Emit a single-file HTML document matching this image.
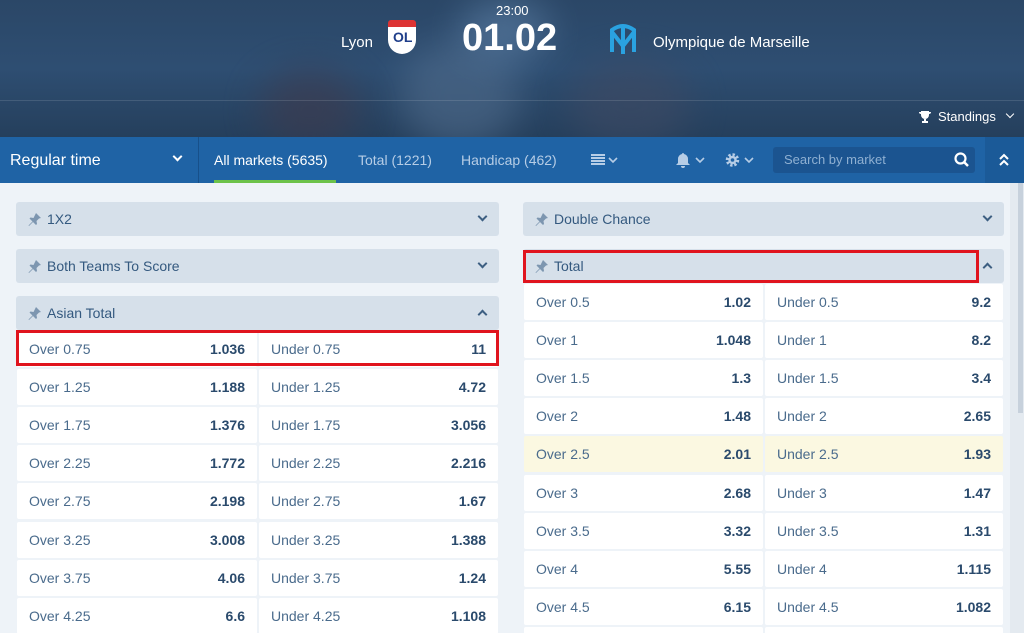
<!DOCTYPE html>
<html><head><meta charset="utf-8">
<style>
*{box-sizing:border-box;margin:0;padding:0}
html,body{width:1024px;height:633px;overflow:hidden}
body{background:#eef3f8;font-family:"Liberation Sans",sans-serif;position:relative}
.hdr{position:absolute;left:0;top:0;width:1024px;height:137px;background:linear-gradient(180deg,#2b4767 0%,#2e4e72 50%,#253f5c 100%);overflow:hidden}
.blob{position:absolute;border-radius:50%;filter:blur(18px);opacity:.6}
.t{position:absolute;color:#fff;white-space:nowrap}
.nav{position:absolute;left:0;top:137px;width:1024px;height:46px;background:#1f63a5}
.box{position:absolute;background:#d6e0ea;border-radius:3px;height:34px}
.box svg.pin{position:absolute;left:12px;top:10px}
.box .lbl{position:absolute;left:31px;top:9px;font-size:14px;color:#34597f}
.box .chev{position:absolute;right:13px;top:11px;width:7px;height:7px;border-right:2px solid #3d5f82;border-bottom:2px solid #3d5f82;transform:rotate(45deg)}
.box .up{position:absolute;right:13px;top:15px;width:7px;height:7px;border-left:2px solid #3d5f82;border-top:2px solid #3d5f82;transform:rotate(45deg)}
.cell{position:absolute;background:#fff;height:36px;border-radius:2px}
.cell .a{position:absolute;left:12px;top:10px;font-size:14px;color:#4a6b8c}
.cell .b{position:absolute;right:12px;top:10px;font-size:14px;color:#2a4a6c;font-weight:bold}
.y{background:#fbf8e1}
.red{position:absolute;border:3px solid #e0141e}
</style></head><body>
<div class="hdr">
 <div class="blob" style="left:400px;top:40px;width:120px;height:110px;background:#506c8c"></div>
 <div class="blob" style="left:260px;top:70px;width:100px;height:80px;background:#3f3a4c"></div>
 <div class="blob" style="left:570px;top:60px;width:120px;height:90px;background:#3f4a63"></div>
 <div class="blob" style="left:460px;top:0;width:90px;height:60px;background:#5f82a8"></div>
 <div style="position:absolute;left:0;top:100px;width:1024px;height:1px;background:rgba(255,255,255,.12)"></div>
 <div class="t" style="left:496px;top:3px;font-size:13px">23:00</div>
 <div class="t" style="left:462px;top:17px;font-size:38px;font-weight:bold">01.02</div>
 <div class="t" style="left:341px;top:34px;font-size:15px">Lyon</div>
 <div style="position:absolute;left:388px;top:20px;width:28px;height:34px;background:#fff;border-radius:3px 3px 14px 14px;border-top:7px solid #d33"></div>
 <div class="t" style="left:393px;top:29px;font-size:14px;font-weight:bold;color:#1f3e8a">OL</div>
 <svg style="position:absolute;left:609px;top:22px" width="28" height="34" viewBox="0 0 28 34"><path d="M3 30 L3 8 Q14 0 25 8 L25 30 M3 10 L14 24 L25 10 M14 4 L14 32" stroke="#2aa2e0" stroke-width="4" fill="none"/></svg>
 <div class="t" style="left:653px;top:34px;font-size:15px">Olympique de Marseille</div>
 <svg style="position:absolute;left:918px;top:110px" width="14" height="14" viewBox="0 0 14 14"><path d="M3 1h8v4a4 4 0 0 1-8 0z M1 2h2v2a2 2 0 0 1-2-2z M11 2h2a2 2 0 0 1-2 2z M6 9h2v2h2v2H4v-2h2z" fill="#fff"/></svg>
 <div class="t" style="left:938px;top:109px;font-size:13px">Standings</div>
 <div style="position:absolute;left:1007px;top:111px;width:6px;height:6px;border-right:1.5px solid #fff;border-bottom:1.5px solid #fff;transform:rotate(45deg)"></div>
</div>
<div class="nav">
 <div class="t" style="left:10px;top:15px;font-size:16px">Regular time</div>
 <div style="position:absolute;left:174px;top:16px;width:7px;height:7px;border-right:2px solid #fff;border-bottom:2px solid #fff;transform:rotate(45deg)"></div>
 <div style="position:absolute;left:198px;top:0;width:1px;height:46px;background:#17508a"></div>
 <div class="t" style="left:214px;top:15px;font-size:14px">All markets (5635)</div>
 <div style="position:absolute;left:214px;top:43px;width:122px;height:3px;background:#6cc24a"></div>
 <div class="t" style="left:358px;top:15px;font-size:14px;color:#b6cde6">Total (1221)</div>
 <div class="t" style="left:461px;top:15px;font-size:14px;color:#b6cde6">Handicap (462)</div>
 <svg style="position:absolute;left:590px;top:16px" width="32" height="14"><path d="M1 2h14M1 5h14M1 8h14M1 11h14" stroke="#b6cde6" stroke-width="2"/><path d="M19 5l4 4 4-4" stroke="#b6cde6" stroke-width="1.6" fill="none"/></svg>
 <svg style="position:absolute;left:676px;top:15px" width="34" height="16"><path d="M7 1a1 1 0 0 1 1 1 5 5 0 0 1 4 5v4l2 2H0l2-2V7a5 5 0 0 1 4-5 1 1 0 0 1 1-1z M5 14h4a2 2 0 0 1-4 0z" fill="#b6cde6"/><path d="M20 6l4 4 4-4" stroke="#b6cde6" stroke-width="1.6" fill="none"/></svg>
 <svg style="position:absolute;left:725px;top:15px" width="34" height="16"><circle cx="7.5" cy="8" r="5" fill="none" stroke="#b6cde6" stroke-width="3.5" stroke-dasharray="2.2 1.7"/><circle cx="7.5" cy="8" r="4.2" fill="#b6cde6"/><circle cx="7.5" cy="8" r="1.8" fill="#1f63a5"/><path d="M20 6l4 4 4-4" stroke="#b6cde6" stroke-width="1.6" fill="none"/></svg>
 <div style="position:absolute;left:773px;top:10px;width:202px;height:26px;background:#1b5490;border-radius:3px"></div>
 <div class="t" style="left:784px;top:15px;font-size:13px;color:#8fb0d2">Search by market</div>
 <svg style="position:absolute;left:954px;top:15px" width="16" height="16"><circle cx="6.5" cy="6.5" r="5" stroke="#fff" stroke-width="2.2" fill="none"/><path d="M10 10 L14 14" stroke="#fff" stroke-width="2.5"/></svg>
 <div style="position:absolute;left:985px;top:0;width:39px;height:46px;background:#1b5a98"></div>
 <svg style="position:absolute;left:998px;top:16px" width="12" height="14"><path d="M2 6l4-4 4 4M2 12l4-4 4 4" stroke="#fff" stroke-width="2" fill="none"/></svg>
</div>
<div style="position:absolute;left:1010px;top:183px;width:14px;height:450px;background:#e4eaf0"></div>
<div style="position:absolute;left:1018px;top:183px;width:5px;height:230px;background:#c7d1dc"></div>

<div id="boxes"></div>
<script>
var pin='<svg class="pin" width="14" height="14" viewBox="0 0 14 14"><path d="M8 1l5 5-2 .5-2.5 2.5.5 3-1 1-3-3-4 4-.5-.5 4-4-3-3 1-1 3 .5L7 3z" fill="#7d96b0"/></svg>';
var B=[[16,202,483,"1X2","chev"],[16,249,483,"Both Teams To Score","chev"],[16,296,483,"Asian Total","up"],[523,202,481,"Double Chance","chev"],[523,249,481,"Total","up"]];
var h="";
B.forEach(function(b){h+='<div class="box" style="left:'+b[0]+'px;top:'+b[1]+'px;width:'+b[2]+'px">'+pin+'<span class="lbl">'+b[3]+'</span><span class="'+b[4]+'"></span></div>'});
var L=[["Over 0.75","1.036","Under 0.75","11"],["Over 1.25","1.188","Under 1.25","4.72"],["Over 1.75","1.376","Under 1.75","3.056"],["Over 2.25","1.772","Under 2.25","2.216"],["Over 2.75","2.198","Under 2.75","1.67"],["Over 3.25","3.008","Under 3.25","1.388"],["Over 3.75","4.06","Under 3.75","1.24"],["Over 4.25","6.6","Under 4.25","1.108"]];
var R=[["Over 0.5","1.02","Under 0.5","9.2"],["Over 1","1.048","Under 1","8.2"],["Over 1.5","1.3","Under 1.5","3.4"],["Over 2","1.48","Under 2","2.65"],["Over 2.5","2.01","Under 2.5","1.93"],["Over 3","2.68","Under 3","1.47"],["Over 3.5","3.32","Under 3.5","1.31"],["Over 4","5.55","Under 4","1.115"],["Over 4.5","6.15","Under 4.5","1.082"],["","","",""]];
function row(x1,w1,x2,w2,y,r,cls){h+='<div class="cell '+cls+'" style="left:'+x1+'px;top:'+y+'px;width:'+w1+'px"><span class="a">'+r[0]+'</span><span class="b">'+r[1]+'</span></div>';
h+='<div class="cell '+cls+'" style="left:'+x2+'px;top:'+y+'px;width:'+w2+'px"><span class="a">'+r[2]+'</span><span class="b">'+r[3]+'</span></div>';}
L.forEach(function(r,i){row(17,240,259,239,Math.round(330.5+i*38.2),r,"")});
R.forEach(function(r,i){row(524,239,765,238,Math.round(283.5+i*38.2),r,i==4?"y":"")});
h+='<div class="red" style="left:16px;top:330px;width:483px;height:36px"></div><div class="red" style="left:523px;top:250px;width:456px;height:33px"></div>';
document.body.insertAdjacentHTML("beforeend",h);
</script>
</body></html>
